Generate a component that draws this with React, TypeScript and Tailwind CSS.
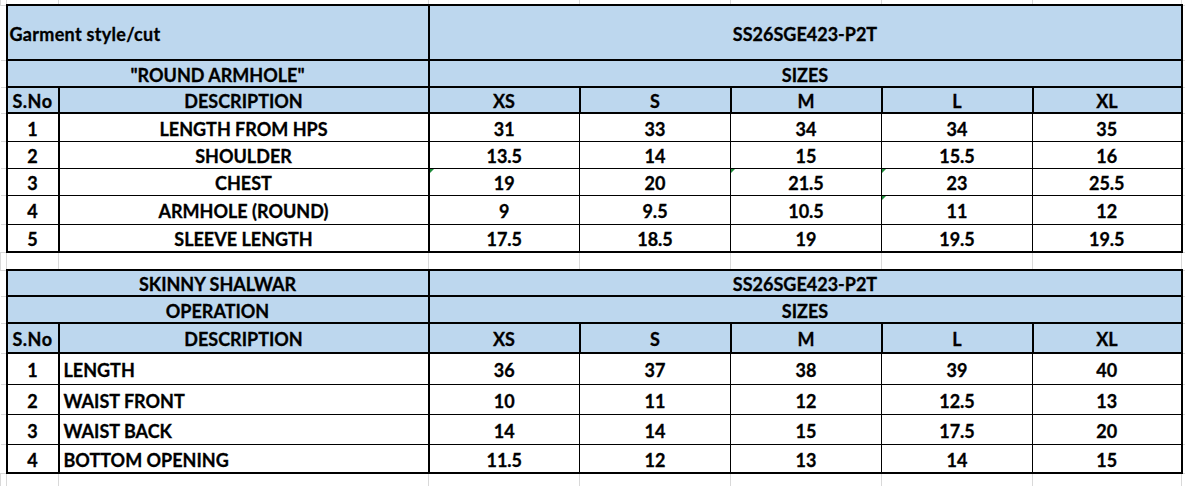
import React from "react";

const COLS = [6, 52, 370, 151, 151, 151, 151, 149, 4];
const SIZES = ["XS", "S", "M", "L", "XL"];

const TOP_ROWS = [
  { h: "h-[28px]", cells: ["1", "LENGTH FROM HPS", "31", "33", "34", "34", "35"] },
  { h: "h-[27px]", cells: ["2", "SHOULDER", "13.5", "14", "15", "15.5", "16"] },
  { h: "h-[27px]", cells: ["3", "CHEST", "19", "20", "21.5", "23", "25.5"], marks: [2, 4, 5] },
  { h: "h-[29px]", cells: ["4", "ARMHOLE (ROUND)", "9", "9.5", "10.5", "11", "12"], marks: [5] },
  { h: "h-[28px]", cells: ["5", "SLEEVE LENGTH", "17.5", "18.5", "19", "19.5", "19.5"] },
];

const SHALWAR_ROWS = [
  { h: "h-[31px]", cells: ["1", "LENGTH", "36", "37", "38", "39", "40"] },
  { h: "h-[30px]", cells: ["2", "WAIST FRONT", "10", "11", "12", "12.5", "13"] },
  { h: "h-[30px]", cells: ["3", "WAIST BACK", "14", "14", "15", "17.5", "20"] },
  { h: "h-[29px]", cells: ["4", "BOTTOM OPENING", "11.5", "12", "13", "14", "15"] },
];

const hdr = "bg-[#bdd7ee] border-2 border-black p-0 pt-[2px]";

// excel gridline cells outside the tables
const Edge = () => <td className="border-y border-[#d9d9d9] p-0" />;

const Spacer = ({ h, top }: { h: string; top?: boolean }) => (
  <tr className={h}>
    {COLS.map((_, i) => (
      <td
        key={i}
        className={
          top || i === 0 || i === COLS.length - 1
            ? "border-x border-[#d9d9d9] p-0"
            : "border-x border-b border-[#d9d9d9] p-0"
        }
      />
    ))}
  </tr>
);

type Row = { h: string; cells: string[]; marks?: number[] };

const BodyRows = ({ rows, leftDesc }: { rows: Row[]; leftDesc?: boolean }) => (
  <>
    {rows.map((r, ri) => {
      const last = ri === rows.length - 1;
      return (
        <tr key={ri} className={r.h}>
          <Edge />
          {r.cells.map((c, ci) => (
            <td
              key={ci}
              className={[
                "relative border border-black p-0 pt-[3px]",
                ci === 1 && leftDesc ? "text-left pl-[4px]" : "text-center",
                ci === 0 ? "border-l-2 border-r-2" : "",
                ci === 1 ? "border-r-2" : "",
                ci === 6 ? "border-r-2" : "",
                last ? "border-b-2" : "",
              ].join(" ")}
            >
              {r.marks?.includes(ci) && (
                <span className="absolute left-0 top-0 h-0 w-0 border-t-[4px] border-r-[4px] border-t-[#1e8c3a] border-r-transparent" />
              )}
              {c}
            </td>
          ))}
          <Edge />
        </tr>
      );
    })}
  </>
);

const SizeHeader = ({ h }: { h: string }) => (
  <tr className={h}>
    <Edge />
    <td className={hdr + " text-center tracking-[0.5px]"}>S.No</td>
    <td className={hdr + " text-center"}>DESCRIPTION</td>
    {SIZES.map((s) => (
      <td key={s} className={hdr + " text-center"}>
        {s}
      </td>
    ))}
    <Edge />
  </tr>
);

export default function App() {
  return (
    <div className="w-[1185px] h-[486px] overflow-hidden bg-white text-black font-bold text-[18px] leading-none font-['Lato',sans-serif] [-webkit-text-stroke:0.3px_black]">
      <table className="table-fixed border-collapse w-[1185px]">
        <colgroup>
          {COLS.map((w, i) => (
            <col key={i} style={{ width: w }} />
          ))}
        </colgroup>
        <tbody>
          <Spacer h="h-[5px]" top />

          {/* round armhole spec */}
          <tr className="h-[55px]">
            <Edge />
            <td colSpan={2} className={hdr + " text-left pl-[2px] tracking-[0.3px]"}>
              Garment style/cut
            </td>
            <td colSpan={5} className={hdr + " text-center"}>
              SS26SGE423-P2T
            </td>
            <Edge />
          </tr>
          <tr className="h-[27px]">
            <Edge />
            <td colSpan={2} className={hdr + " text-center"}>
              "ROUND ARMHOLE"
            </td>
            <td colSpan={5} className={hdr + " text-center"}>
              SIZES
            </td>
            <Edge />
          </tr>
          <SizeHeader h="h-[26px]" />
          <BodyRows rows={TOP_ROWS} />

          <Spacer h="h-[18px]" />

          {/* skinny shalwar spec */}
          <tr className="h-[26px]">
            <Edge />
            <td colSpan={2} className={hdr + " text-center"}>
              SKINNY SHALWAR
            </td>
            <td colSpan={5} className={hdr + " text-center"}>
              SS26SGE423-P2T
            </td>
            <Edge />
          </tr>
          <tr className="h-[27px]">
            <Edge />
            <td colSpan={2} className={hdr + " text-center"}>
              OPERATION
            </td>
            <td colSpan={5} className={hdr + " text-center"}>
              SIZES
            </td>
            <Edge />
          </tr>
          <SizeHeader h="h-[30px]" />
          <BodyRows rows={SHALWAR_ROWS} leftDesc />

          <Spacer h="h-[13px]" top />
        </tbody>
      </table>
    </div>
  );
}
